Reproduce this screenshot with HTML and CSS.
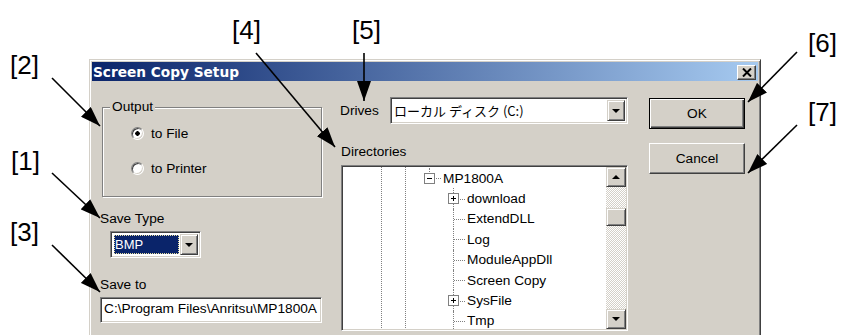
FILE: index.html
```html
<!DOCTYPE html>
<html lang="ja">
<head>
  <meta charset="UTF-8">
  <title>Screen Copy Setup</title>
  <link rel="stylesheet" href="styles.css">
</head>
<body>
  <div class="page">
    <div class="dialog">
      <div class="titlebar">
        <span class="title">Screen Copy Setup</span>
        <span class="close-btn">
          <svg width="10" height="9" viewBox="0 0 10 9"><path d="M1 0.5 L9 8.5 M9 0.5 L1 8.5" stroke="#000" stroke-width="2"/></svg>
        </span>
      </div>

      <div class="dlg-body">
        <!-- left column -->
        <div class="col-left">
          <fieldset class="group">
            <legend>Output</legend>
            <div class="radio-row"><span class="radio checked"></span>to File</div>
            <div class="radio-row second"><span class="radio"></span>to Printer</div>
          </fieldset>
          <div class="lbl lbl-type">Save Type</div>
          <div class="combo combo-type">
            <span class="combo-sel">BMP</span>
            <span class="combo-btn"><span class="tri-down"></span></span>
          </div>
          <div class="lbl lbl-to">Save to</div>
          <div class="field">C:\Program Files\Anritsu\MP1800A</div>
        </div>

        <!-- middle column -->
        <div class="col-mid">
          <div class="drives-row">
            <span class="lbl">Drives</span>
            <div class="combo combo-drive">
              <span class="combo-val">ローカル ディスク (C:)</span>
              <span class="combo-btn"><span class="tri-down"></span></span>
            </div>
          </div>
          <div class="lbl lbl-dirs">Directories</div>
          <div class="tree">
            <div class="tree-list">
              <div class="row lv3">
                <span class="node top">
                  <svg class="box" width="11" height="11" viewBox="0 0 11 11"><rect x="0.5" y="0.5" width="10" height="10" fill="#fff" stroke="#808080"/><path d="M3 5.5 H8" stroke="#000"/></svg>
                </span>
                <span class="name">MP1800A</span>
              </div>
              <div class="row lv4">
                <span class="node">
                  <svg class="box" width="11" height="11" viewBox="0 0 11 11"><rect x="0.5" y="0.5" width="10" height="10" fill="#fff" stroke="#808080"/><path d="M3 5.5 H8 M5.5 3 V8" stroke="#000"/></svg>
                </span>
                <span class="name">download</span>
              </div>
              <div class="row lv4"><span class="node"></span><span class="name">ExtendDLL</span></div>
              <div class="row lv4"><span class="node"></span><span class="name">Log</span></div>
              <div class="row lv4"><span class="node"></span><span class="name">ModuleAppDll</span></div>
              <div class="row lv4"><span class="node"></span><span class="name">Screen Copy</span></div>
              <div class="row lv4">
                <span class="node">
                  <svg class="box" width="11" height="11" viewBox="0 0 11 11"><rect x="0.5" y="0.5" width="10" height="10" fill="#fff" stroke="#808080"/><path d="M3 5.5 H8 M5.5 3 V8" stroke="#000"/></svg>
                </span>
                <span class="name">SysFile</span>
              </div>
              <div class="row lv4"><span class="node"></span><span class="name">Tmp</span></div>
            </div>
            <div class="vscroll">
              <span class="sbtn"><span class="tri-up"></span></span>
              <div class="track"><span class="thumb"></span></div>
              <span class="sbtn"><span class="tri-down"></span></span>
            </div>
          </div>
        </div>

        <!-- right column -->
        <div class="col-right">
          <div class="btn btn-default">OK</div>
          <div class="btn">Cancel</div>
        </div>
      </div>
    </div>

    <!-- callout numbers and arrows -->
    <svg class="callouts" width="841" height="335" viewBox="0 0 841 335">
      <defs>
        <marker id="head" viewBox="0 0 20 14" refX="20" refY="7" markerWidth="20" markerHeight="14" markerUnits="userSpaceOnUse" orient="auto">
          <path d="M0 0 L20 7 L0 14 Z" fill="#000"/>
        </marker>
      </defs>
      <g class="callout-text">
        <text x="10" y="74">[2]</text>
        <text x="11" y="170">[1]</text>
        <text x="10" y="241">[3]</text>
        <text x="232" y="39">[4]</text>
        <text x="352" y="39">[5]</text>
        <text x="808" y="52">[6]</text>
        <text x="808" y="121">[7]</text>
      </g>
      <g stroke="#000" stroke-width="1.6" marker-end="url(#head)">
        <line x1="52" y1="78" x2="100" y2="126"/>
        <line x1="52" y1="173" x2="100" y2="218"/>
        <line x1="52" y1="245" x2="100" y2="292"/>
        <line x1="256" y1="53" x2="335" y2="147"/>
        <line x1="364" y1="53" x2="364" y2="101"/>
        <line x1="797" y1="52" x2="748" y2="102"/>
        <line x1="797" y1="125" x2="748" y2="173"/>
      </g>
    </svg>
  </div>
</body>
</html>
```

FILE: styles.css
```css
body {
  margin: 0;
  background: #fff;
  font-family: "Liberation Sans", Arial, sans-serif;
  font-size: 13.7px;
  color: #000;
}
.page {
  position: relative;
  width: 841px;
  height: 335px;
  overflow: hidden;
  box-sizing: border-box;
  padding: 59px 0 0 89px;
}
.dialog {
  width: 672px;
  height: 300px;
  box-sizing: border-box;
  padding: 2px;
  background: #d4d0c8;
  border: 1px solid;
  border-color: #d4d0c8 #404040 #404040 #d4d0c8;
  box-shadow: inset 1px 1px #fff, inset -1px -1px #808080;
}

/* title bar */
.titlebar {
  height: 19px;
  display: flex;
  align-items: center;
  justify-content: space-between;
  padding: 0 2px 0 1px;
  background: linear-gradient(to right, #0a246a, #a6caf0);
}
.title {
  color: #fff;
  font-family: "DejaVu Sans", sans-serif;
  font-weight: bold;
  font-size: 13.7px;
}
.close-btn {
  width: 19px;
  height: 15px;
  box-sizing: border-box;
  display: flex;
  align-items: center;
  justify-content: center;
  margin-top: 2px;
  background: #d4d0c8;
  border: 1px solid;
  border-color: #fff #404040 #404040 #fff;
  box-shadow: inset -1px -1px #808080;
}

/* body columns */
.dlg-body {
  display: flex;
  padding-left: 8px;
}
.col-left {
  width: 222px;
  display: flex;
  flex-direction: column;
  align-items: flex-start;
}
.col-mid {
  width: 288px;
  margin-left: 18px;
  display: flex;
  flex-direction: column;
}
.col-right {
  width: 96px;
  margin-left: 21px;
  display: flex;
  flex-direction: column;
}
.lbl {
  line-height: 16px;
  white-space: nowrap;
}

/* output group */
.group {
  margin: 18px 0 0 2px;
  width: 220px;
  box-sizing: border-box;
  padding: 8px 0 18px 0;
  border: 1px solid #808080;
  box-shadow: inset 1px 1px #fff, 1px 1px #fff;
}
.group legend {
  margin-left: 7px;
  padding: 0 2px;
  line-height: 16px;
  background: #d4d0c8;
}
.radio-row {
  height: 20px;
  margin-left: 28px;
  display: flex;
  align-items: center;
}
.radio-row.second {
  margin-top: 15px;
}
.radio {
  width: 13px;
  height: 13px;
  box-sizing: border-box;
  margin-right: 7px;
  border-radius: 50%;
  border: 1px solid;
  border-color: #808080 #fff #fff #808080;
  box-shadow: inset 1px 1px #404040, inset -1px -1px #d4d0c8;
  background: #fff;
}
.radio.checked {
  background: radial-gradient(circle, #000 0 2px, #fff 2.5px);
}

.lbl-type { margin-top: 14px; }
.lbl-to { margin-top: 19px; }

/* combo boxes */
.combo {
  display: flex;
  box-sizing: border-box;
  height: 27px;
  padding: 2px;
  background: #fff;
  border: 1px solid;
  border-color: #808080 #fff #fff #808080;
  box-shadow: inset 1px 1px #404040, inset -1px -1px #d4d0c8;
}
.combo-type {
  width: 91px;
  margin: 4px 0 0 10px;
}
.combo-sel {
  width: 65px;
  margin: 1px 0 1px 1px;
  box-sizing: border-box;
  padding-left: 1px;
  background: #0a246a;
  color: #fff;
  font-size: 13px;
  line-height: 19px;
  outline: 1px dotted #e8e0a0;
  outline-offset: -1px;
}
.combo-btn {
  width: 18px;
  margin-left: auto;
  box-sizing: border-box;
  display: flex;
  align-items: center;
  justify-content: center;
  background: #d4d0c8;
  border: 1px solid;
  border-color: #d4d0c8 #404040 #404040 #d4d0c8;
  box-shadow: inset 1px 1px #fff, inset -1px -1px #808080;
}
.tri-down {
  width: 0;
  height: 0;
  border-left: 4px solid transparent;
  border-right: 4px solid transparent;
  border-top: 4px solid #000;
}
.tri-up {
  width: 0;
  height: 0;
  border-left: 4px solid transparent;
  border-right: 4px solid transparent;
  border-bottom: 4px solid #000;
}

/* save to field */
.field {
  margin-top: 4px;
  width: 222px;
  height: 26px;
  box-sizing: border-box;
  padding: 0 0 0 3px;
  line-height: 22px;
  white-space: nowrap;
  overflow: hidden;
  background: #fff;
  border: 1px solid;
  border-color: #808080 #fff #fff #808080;
  box-shadow: inset 1px 1px #404040, inset -1px -1px #d4d0c8;
}

/* drives */
.drives-row {
  margin-top: 16px;
  display: flex;
  align-items: center;
  justify-content: space-between;
}
.combo-drive {
  width: 238px;
}
.combo-val {
  padding-left: 1px;
  font-family: "Noto Sans CJK JP", "Liberation Sans", sans-serif;
  font-size: 13px;
  line-height: 21px;
}

/* directories tree */
.lbl-dirs {
  margin-top: 20px;
  padding-left: 1px;
}
.tree {
  margin: 5px 0 0 1px;
  height: 166px;
  box-sizing: border-box;
  display: flex;
  background: #fff;
  border: 1px solid;
  border-color: #808080 #fff #fff #808080;
  box-shadow: inset 1px 1px #404040, inset -1px -1px #d4d0c8;
  padding: 1px;
}
.tree-list {
  flex: 1;
  padding-top: 1px;
  overflow: hidden;
  background:
    linear-gradient(#808080 50%, transparent 0) 38px 0 / 1px 2px repeat-y,
    linear-gradient(#808080 50%, transparent 0) 62px 0 / 1px 2px repeat-y;
}
.row {
  height: 20.4px;
  display: flex;
  align-items: center;
  white-space: nowrap;
}
.row.lv3 { padding-left: 74px; }
.row.lv4 { padding-left: 98px; }
.node {
  position: relative;
  width: 24px;
  height: 100%;
  display: flex;
  align-items: center;
}
.node::before {
  content: "";
  position: absolute;
  left: 13px;
  right: 0;
  top: 50%;
  border-top: 1px dotted #808080;
}
.node::after {
  content: "";
  position: absolute;
  left: 12px;
  top: 0;
  bottom: 0;
  border-left: 1px dotted #808080;
}
.node.top::after {
  bottom: 50%;
}
.node .box {
  position: relative;
  z-index: 1;
  margin-left: 7px;
}
.name {
  margin-left: 2px;
}

/* scrollbar */
.vscroll {
  width: 20px;
  display: flex;
  flex-direction: column;
}
.sbtn,
.thumb {
  height: 20px;
  box-sizing: border-box;
  display: flex;
  align-items: center;
  justify-content: center;
  background: #d4d0c8;
  border: 1px solid;
  border-color: #d4d0c8 #404040 #404040 #d4d0c8;
  box-shadow: inset 1px 1px #fff, inset -1px -1px #808080;
}
.track {
  flex: 1;
  padding-top: 21px;
  background: repeating-conic-gradient(#fff 0 25%, #d4d0c8 0 50%) 0 0 / 2px 2px;
}
.thumb {
  height: 18px;
}

/* buttons */
.btn {
  height: 31px;
  box-sizing: border-box;
  display: flex;
  align-items: center;
  justify-content: center;
  background: #d4d0c8;
  border: 1px solid;
  border-color: #fff #404040 #404040 #fff;
  box-shadow: inset -1px -1px #808080;
}
.btn-default {
  margin-top: 17px;
  margin-bottom: 14px;
  border-color: #000;
  box-shadow: inset 1px 1px #fff, inset -1px -1px #404040, inset -2px -2px #808080;
}

/* callouts */
.callouts {
  position: absolute;
  left: 0;
  top: 0;
  pointer-events: none;
}
.callout-text {
  font-family: "Liberation Sans", Arial, sans-serif;
  font-size: 26px;
  fill: #000;
}
```
